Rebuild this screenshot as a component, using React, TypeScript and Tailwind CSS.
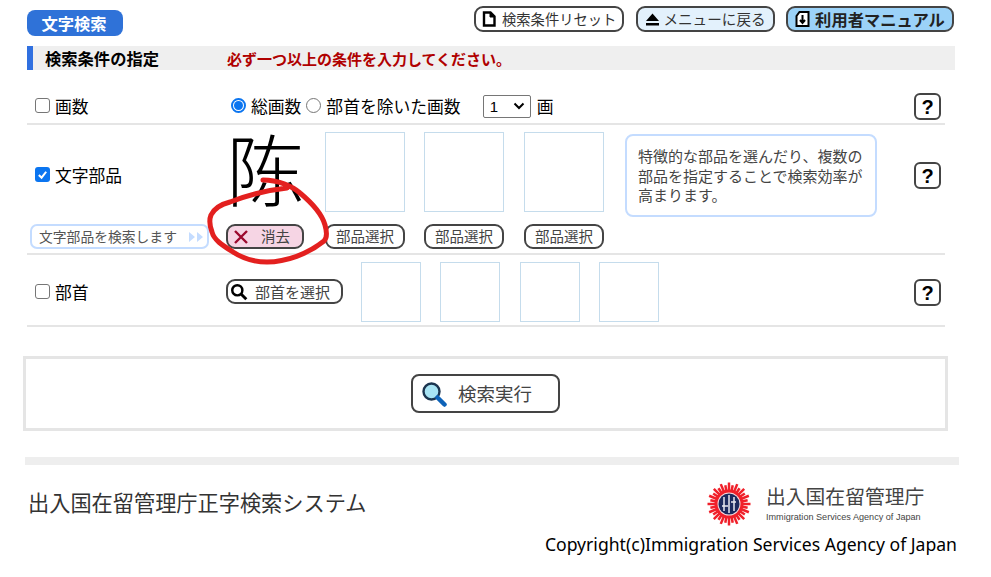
import React from "react";

const Q = () => (
  <div className="w-[27px] h-[27px] rounded-[6px] border-2 border-[#444] bg-white flex items-center justify-center text-[20px] font-bold leading-none text-black font-['Liberation_Sans']">?</div>
);

const Btn = ({ className = "", children }: { className?: string; children: React.ReactNode }) => (
  <div className={"flex items-center rounded-[9px] border-2 border-[#444] whitespace-nowrap leading-none " + className}>{children}</div>
);

const Box = ({ className = "" }: { className?: string }) => <div className={"border border-[#c5dcec] bg-white shrink-0 " + className} />;

const Check = ({ on }: { on?: boolean }) =>
  on ? (
    <span className="w-[15px] h-[15px] rounded-[3px] bg-[#0b75f0] flex items-center justify-center -mt-[2px]">
      <svg width="11" height="11" viewBox="0 0 12 12"><path d="M2 6.5 L5 9.5 L10 3" fill="none" stroke="white" strokeWidth="2.2" /></svg>
    </span>
  ) : (
    <span className="block w-[15px] h-[15px] rounded-[3px] border border-[#767676] bg-white -mt-[2px]" />
  );

const Select = () => (
  <span className="w-[48px] h-[23px] rounded-[2px] border border-[#767676] flex items-center justify-between pl-[6px] pr-[5px] text-[15px] font-['Liberation_Sans']">
    1
    <svg width="12" height="8" viewBox="0 0 12 8"><path d="M1.5 1.5 L6 6 L10.5 1.5" fill="none" stroke="black" strokeWidth="2" /></svg>
  </span>
);

const Logo = () => (
  <svg width="44" height="44" viewBox="0 0 44 44" className="shrink-0">
    {Array.from({ length: 32 }).map((_, i) => (
      <path key={i} d={i % 2 ? "M22 3 V12" : "M22 0.5 V12"} stroke="#f0202a" strokeWidth="2.5" transform={`rotate(${i * 11.25} 22 22)`} />
    ))}
    <circle cx="22" cy="22" r="14.5" fill="#f0202a" />
    <circle cx="22" cy="22" r="11.5" fill="#f4d8dc" />
    <circle cx="22" cy="22" r="10.5" fill="#1c2a5e" />
    <path d="M17 15 V29 M22 13 V31 M27 15 V29 M15 24 H21 M24 20 H29" stroke="#e8e8f0" strokeWidth="1.5" fill="none" />
  </svg>
);

export default function App() {
  return (
    <div className="relative w-[991px] h-[577px] overflow-hidden bg-white text-black font-['Noto_Sans_CJK_JP','Noto_Sans_CJK_SC',sans-serif]">
      <div className="w-[928px] ml-[27px]">
        {/* header */}
        <div className="flex justify-between items-start h-[46px] pt-[6px]">
          <div className="mt-[4px] w-[96px] h-[26px] rounded-[8px] bg-[#2f72d8] text-white font-bold text-[16.3px] flex items-center justify-center leading-none pr-[2px]">文字検索</div>
          <div className="flex">
            <Btn className="w-[150px] h-[26px] bg-white text-[#333] text-[14.3px] gap-[6px] pl-[6px]">
              <svg width="14" height="16" viewBox="0 0 14 16"><path d="M2 1.5 H8.5 L12.5 5.5 V14.5 H2 Z" fill="white" stroke="black" strokeWidth="2.4" /><path d="M8 1 V6 H13" fill="black" stroke="black" /></svg>
              検索条件リセット
            </Btn>
            <Btn className="ml-[12px] w-[139px] h-[26px] bg-[#e3f1fc] text-[#333] text-[14.6px] gap-[3px] justify-center">
              <svg width="15" height="13" viewBox="0 0 15 13"><path d="M7.5 0.5 L14 8 H1 Z M1 10 H14 V12.5 H1 Z" fill="black" /></svg>
              メニューに戻る
            </Btn>
            <Btn className="ml-[11px] mr-[1px] w-[168px] h-[26px] bg-[#9bd2f8] text-[#222] font-bold text-[16.3px] gap-[5px] justify-center">
              <svg width="15" height="16" viewBox="0 0 14 16"><path d="M4 1 H13 V15 H1 V5 Z" fill="white" stroke="black" strokeWidth="2" /><path d="M7 4 V11 M4.5 9 L7 12 L9.5 9" stroke="black" strokeWidth="2" fill="none" /></svg>
              利用者マニュアル
            </Btn>
          </div>
        </div>

        {/* section title */}
        <div className="h-[24px] bg-[#efefef] border-l-[6px] border-[#3070e0] flex items-center leading-none">
          <span className="w-[194px] pl-[12px] font-bold text-[16.3px] text-black">検索条件の指定</span>
          <span className="font-bold text-[15px] text-[#b00000]">必ず一つ以上の条件を入力してください。</span>
        </div>

        {/* rows */}
        <div className="w-[918px]">
          <div className="h-[55px] pt-[23px] border-b-2 border-[#e5e5e5] flex text-[16.8px] leading-none">
            <div className="w-[199px] pl-[8px] flex items-center h-[26px] gap-[5px]">
              <Check />
              <span>画数</span>
            </div>
            <div className="flex items-center h-[26px]">
              <span className="-mt-[2px] ml-[5px] w-[15px] h-[15px] rounded-full border-2 border-[#0b75f0] bg-white flex items-center justify-center mr-[5px]">
                <span className="w-[9px] h-[9px] rounded-full bg-[#0b75f0]" />
              </span>
              <span>総画数</span>
              <span className="-mt-[2px] ml-[5px] w-[15px] h-[15px] rounded-full border border-[#767676] mr-[5px]" />
              <span>部首を除いた画数</span>
              <span className="ml-[22px] mr-[6px]"><Select /></span>
              <span>画</span>
            </div>
            <div className="ml-auto mr-[4px]"><Q /></div>
          </div>

          <div className="h-[130px] border-b-2 border-[#e5e5e5] flex flex-col">
            <div className="flex h-[99px]">
              <div className="w-[199px] pl-[8px] pt-[38px] flex items-start gap-[5px] text-[16.8px] leading-none">
                <span className="h-[24px] flex items-center"><Check on /></span>
                <span className="h-[24px] flex items-center">文字部品</span>
              </div>
              <div className="w-[99px] h-[96px] pr-[20px] text-center text-[78px] leading-[84px] font-extralight font-['Noto_Sans_CJK_SC','Noto_Sans_CJK_JP',sans-serif] text-black">陈</div>
              <div className="pt-[7px] flex">
                <Box className="w-[80px] h-[80px] mr-[19px]" />
                <Box className="w-[80px] h-[80px] mr-[20px]" />
                <Box className="w-[80px] h-[80px]" />
              </div>
              <div className="ml-[21px] mt-[9px] w-[252px] h-[83px] rounded-[8px] border-2 border-[#c4dcff] pl-[11px] pr-[12px] pt-[10px] text-[15px] leading-[19.5px] text-[#444]">
                特徴的な部品を選んだり、複数の<br />部品を指定することで検索効率が<br />高まります。
              </div>
              <div className="ml-auto mr-[4px] pt-[37px]"><Q /></div>
            </div>
            <div className="flex h-[25px] items-start">
              <div className="ml-[3px] w-[179px] h-[25px] rounded-[7px] border-2 border-[#c4dcff] flex items-center justify-between pl-[7px] pr-[3px] text-[13.8px] text-[#555] leading-none whitespace-nowrap">
                文字部品を検索します
                <svg width="16" height="12" viewBox="0 0 16 12"><path d="M1 1 L7 6 L1 11 Z M9 1 L15 6 L9 11 Z" fill="#c4dcff" /></svg>
              </div>
              <Btn className="ml-[17px] w-[78px] h-[25px] bg-[#f6d5e4] text-[#444] text-[14.5px] gap-[12px] pl-[5px]">
                <svg width="16" height="14" viewBox="0 0 16 14"><path d="M2 1 L14 13 M14 1 L2 13" stroke="#9c0a2e" strokeWidth="2.4" /></svg>
                消去
              </Btn>
              <Btn className="ml-[21px] w-[80px] h-[25px] bg-white text-[#444] text-[14.5px] justify-center">部品選択</Btn>
              <Btn className="ml-[19px] w-[80px] h-[25px] bg-white text-[#444] text-[14.5px] justify-center">部品選択</Btn>
              <Btn className="ml-[20px] w-[80px] h-[25px] bg-white text-[#444] text-[14.5px] justify-center">部品選択</Btn>
            </div>
          </div>

          <div className="h-[72px] border-b-2 border-[#e5e5e5] flex">
            <div className="w-[199px] pl-[8px] pt-[25px] flex items-center gap-[5px] h-[50px] text-[16.8px] leading-none">
              <Check />
              <span>部首</span>
            </div>
            <div className="pt-[24px]">
              <Btn className="w-[117px] h-[25px] bg-white text-[#444] text-[15px] gap-[7px] pl-[2px]">
                <svg width="18" height="18" viewBox="0 0 16 16"><circle cx="6.5" cy="6.5" r="4.5" fill="none" stroke="black" strokeWidth="2.2" /><path d="M10 10 L14.5 14.5" stroke="black" strokeWidth="2.6" /></svg>
                部首を選択
              </Btn>
            </div>
            <div className="pt-[7px] flex ml-[18px]">
              <Box className="w-[60px] h-[60px] mr-[19px]" />
              <Box className="w-[60px] h-[60px] mr-[20px]" />
              <Box className="w-[60px] h-[60px] mr-[19px]" />
              <Box className="w-[60px] h-[60px]" />
            </div>
            <div className="ml-auto mr-[4px] pt-[24px]"><Q /></div>
          </div>
        </div>
      </div>

      {/* search */}
      <div className="ml-[23px] mt-[29px] w-[925px] h-[75px] border-[3px] border-[#e5e5e5] flex items-center justify-center">
        <Btn className="w-[149px] h-[39px] bg-white text-[#444] text-[18.5px] gap-[11px] pl-[8px] !rounded-[8px]">
          <svg width="26" height="26" viewBox="0 0 26 26">
            <circle cx="10.5" cy="10.5" r="8" fill="#a8e4f4" stroke="#1c3550" strokeWidth="2.4" />
            <path d="M16.5 16.5 L23.5 23.5" stroke="#0d62b8" strokeWidth="4.5" strokeLinecap="round" />
          </svg>
          検索実行
        </Btn>
      </div>

      {/* footer */}
      <div className="ml-[25px] mt-[26px] w-[934px] h-[8px] bg-[#eeeeee]" />
      <div className="flex ml-[28px] w-[929px] justify-between">
        <div className="pt-[26px] text-[21.2px] leading-none text-[#333] whitespace-nowrap">出入国在留管理庁正字検索システム</div>
        <div className="flex items-start pt-[17px] gap-[15px] w-[250px]">
          <Logo />
          <div className="flex flex-col pt-[4px]">
            <span className="text-[19.8px] leading-none text-[#444] whitespace-nowrap">出入国在留管理庁</span>
            <span className="mt-[7px] text-[9.1px] leading-none text-[#444] font-['Liberation_Sans'] whitespace-nowrap">Immigration Services Agency of Japan</span>
          </div>
        </div>
      </div>
      <div className="w-[957px] text-right mt-[10px] text-[17.6px] leading-none text-black font-['Noto_Sans'] whitespace-nowrap">Copyright(c)Immigration Services Agency of Japan</div>

      {/* hand-drawn red circle */}
      <svg className="absolute left-[200px] top-[170px] pointer-events-none" width="135" height="100" viewBox="0 0 135 100">
        <path d="M63 10 C78 10 92 16 100 23 C112 33 122 44 125 55 C127 62 127 68 124 71 C108 84 86 92 67 92 C54 92 42 88 33 82 C22 75 14 70 12 62 C9 54 9 50 11 45 C15 37 22 34 30 32 C48 25 68 20 87 18" fill="none" stroke="#e3201f" strokeWidth="5" strokeLinecap="round" strokeLinejoin="round" />
      </svg>
    </div>
  );
}
